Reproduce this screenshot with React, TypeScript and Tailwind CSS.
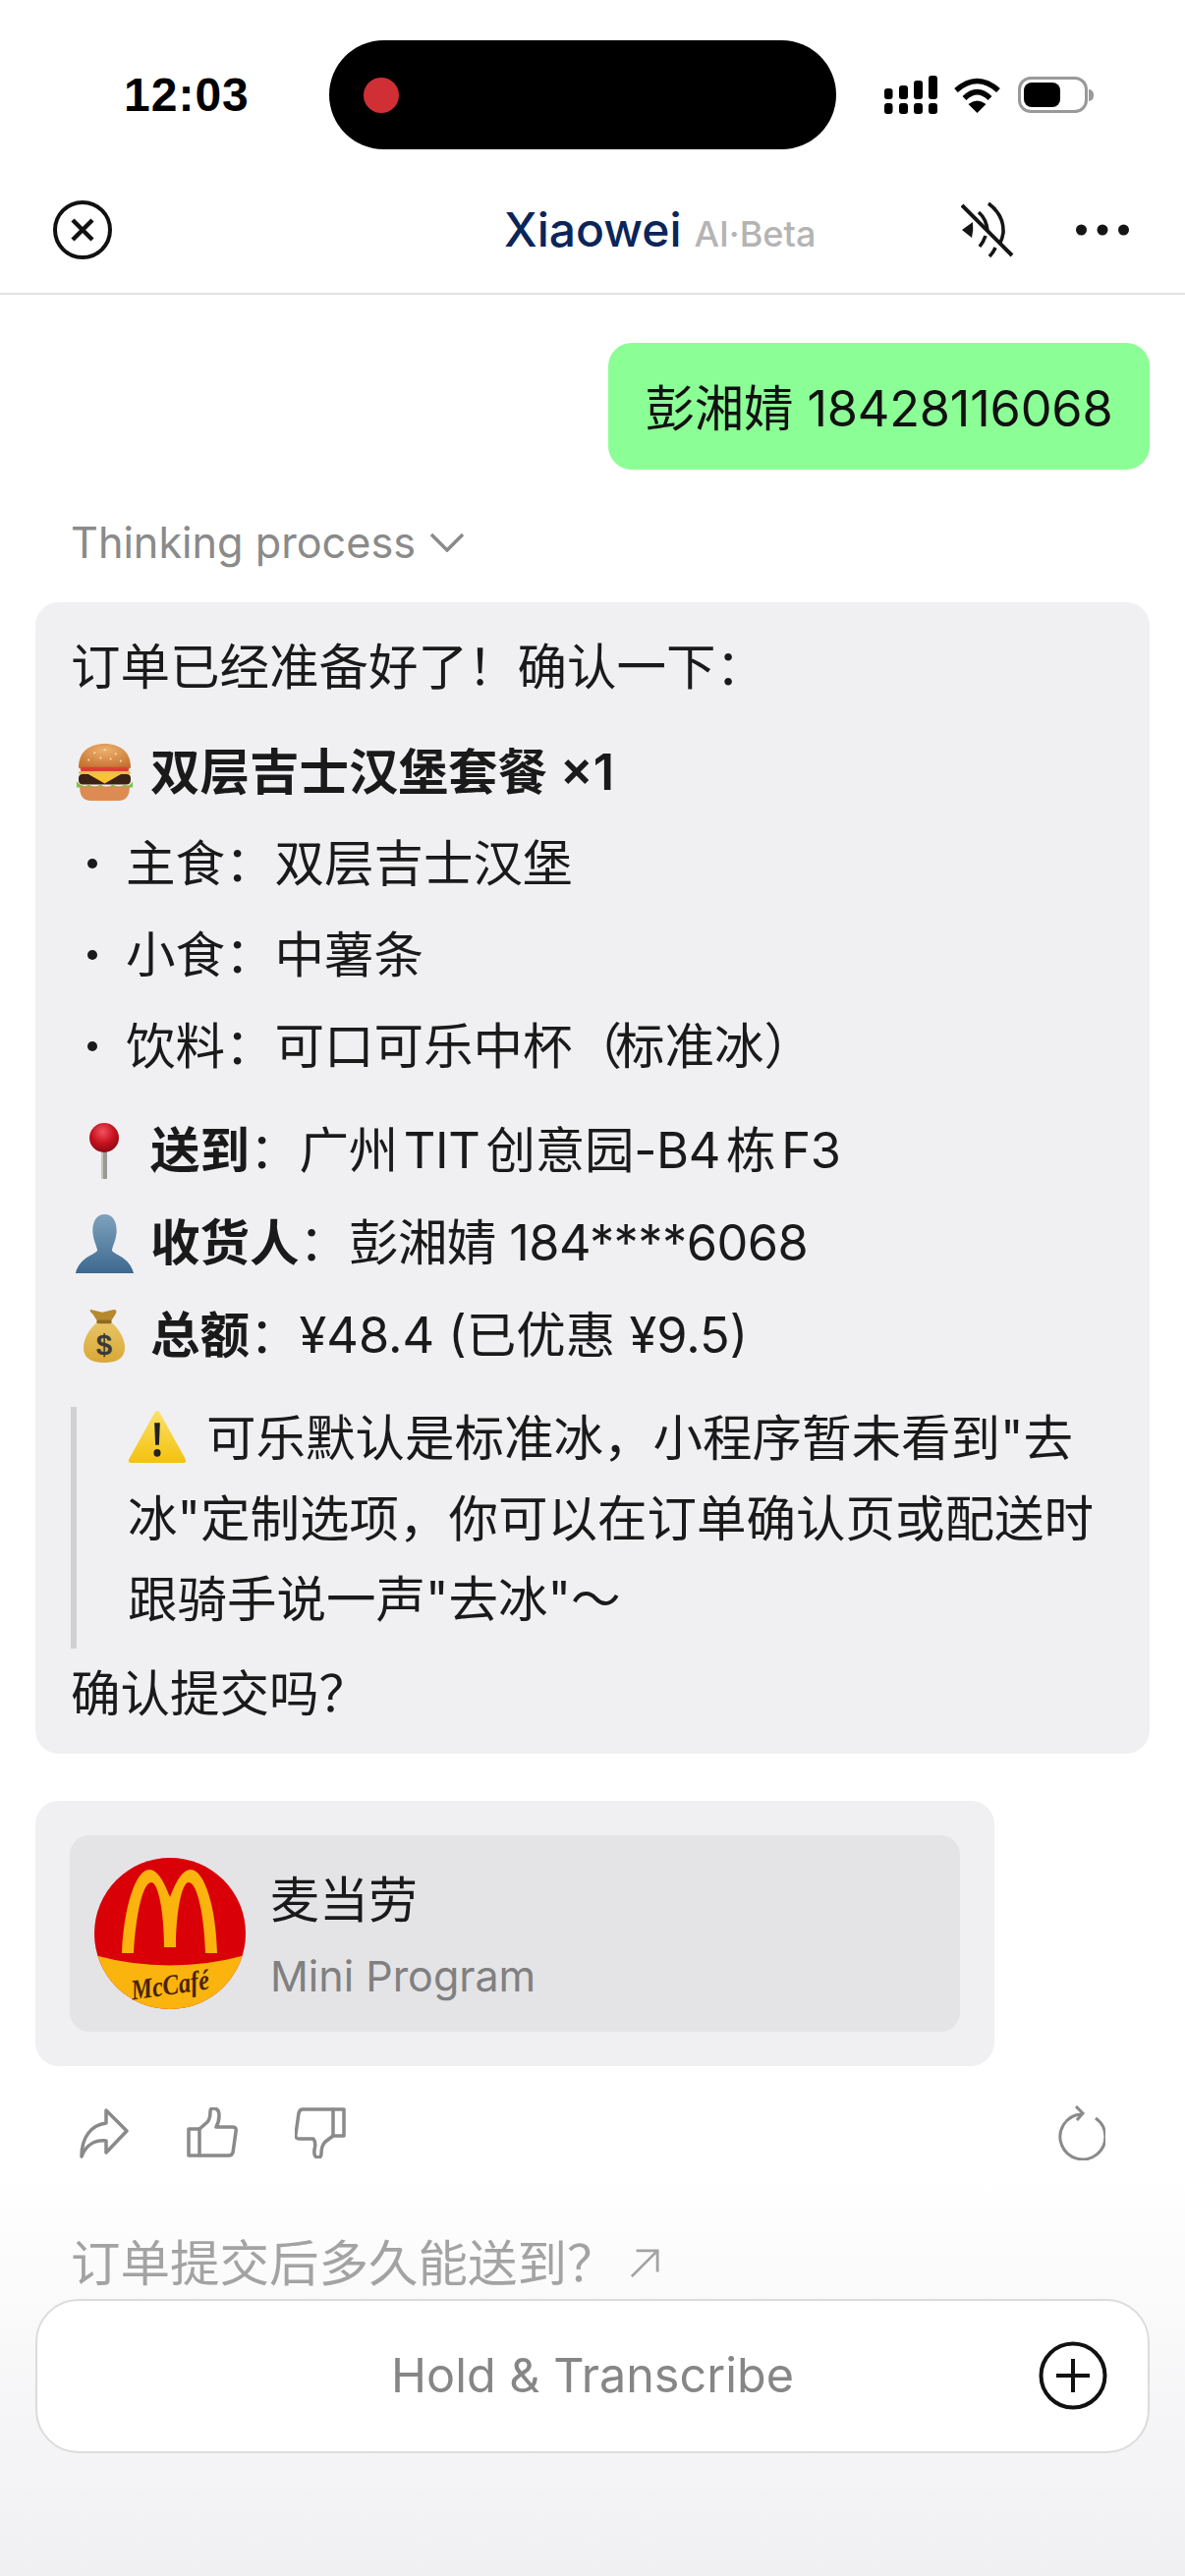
const font = "font-['Inter','Noto_Sans_CJK_SC',sans-serif]";

const CloseIcon = () => (
  <svg width="62" height="62" viewBox="0 0 62 62" fill="none" stroke="#111" strokeWidth="4">
    <circle cx="31" cy="31" r="28" />
    <path d="M21 21 L41 41 M41 21 L21 41" strokeWidth="4.5" />
  </svg>
);

const MuteIcon = () => (
  <svg width="54" height="58" viewBox="0 0 54 58" fill="none" stroke="#151515" strokeWidth="3.6">
    <path d="M12 21 L1 29 L11 37 Q13 29 12 21 Z" fill="#151515" stroke="none" />
    <path d="M18 11 Q26 18 27 30" />
    <path d="M25 35 Q23 41 19 46" />
    <path d="M28 2 Q44 14 43 32 Q42 38 40 42" />
    <path d="M35 47 Q33 52 29 56" />
    <path d="M1 4 L52 55" strokeWidth="4" />
  </svg>
);

const SignalIcon = () => (
  <svg width="54" height="39" viewBox="0 0 54 39" fill="#000">
    <rect x="0" y="13" width="8.5" height="11" rx="3" />
    <rect x="15" y="10" width="9" height="14" rx="3" />
    <rect x="30" y="5" width="9" height="19" rx="3" />
    <rect x="45" y="0" width="9" height="24" rx="3" />
    <rect x="0" y="28" width="8.5" height="11" rx="3" />
    <rect x="15" y="28" width="9" height="11" rx="3" />
    <rect x="30" y="28" width="9" height="11" rx="3" />
    <rect x="45" y="28" width="9" height="11" rx="3" />
  </svg>
);

const WifiIcon = () => (
  <svg width="47" height="36" viewBox="0 0 47 36" fill="none" stroke="#000" strokeWidth="5.5">
    <path d="M2 13 Q23.5 -6 45 13" />
    <path d="M10.5 21 Q23.5 8 36.5 21" />
    <path d="M23.5 36 L14.5 27 Q23.5 20 32.5 27 Z" fill="#000" stroke="none" />
  </svg>
);

const BatteryIcon = () => (
  <div className="flex items-center gap-[1px]">
    <div className="w-[71px] h-[37px] rounded-[13px] border-[3px] border-[#999] p-[3px] flex">
      <div className="w-[37px] h-full bg-black rounded-[8px]" />
    </div>
    <div className="w-[5px] h-[12px] bg-[#9a9a9a] rounded-r-full" />
  </div>
);

const DotsIcon = () => (
  <svg width="54" height="14" viewBox="0 0 54 14" fill="#151515">
    <circle cx="5.5" cy="7" r="5.5" />
    <circle cx="27" cy="7" r="5.5" />
    <circle cx="48.5" cy="7" r="5.5" />
  </svg>
);

const Burger = () => (
  <svg width="57" height="58" viewBox="2 2 56 56" preserveAspectRatio="none">
    <defs>
      <radialGradient id="bunTop" cx="0.5" cy="0.25" r="0.8">
        <stop offset="0" stopColor="#eeb06c" />
        <stop offset="1" stopColor="#c26d2c" />
      </radialGradient>
    </defs>
    <path d="M4 25 C4 9 16 2 30 2 C44 2 56 9 56 25 Q56 27 52 27 H8 Q4 27 4 25 Z" fill="url(#bunTop)" />
    <rect x="6" y="25" width="48" height="5" rx="2.5" fill="#d9402c" />
    <rect x="4" y="29" width="52" height="3" rx="1.5" fill="#f0b84a" />
    <rect x="4" y="32" width="52" height="10" rx="4" fill="#3a2015" />
    <path d="M12 31 H48 L30 41 Z" fill="#f8c434" />
    <path d="M2 39 Q8 46 14 42 Q20 46 26 42 Q32 47 38 42 Q44 46 50 42 Q55 45 58 39 V45 H2 Z" fill="#7cc242" />
    <path d="M5 44 H55 Q55 58 44 58 H16 Q5 58 5 44 Z" fill="#dc8c52" />
    <g fill="#f7dfb0">
      <circle cx="20" cy="11" r="1" /><circle cx="30" cy="8" r="1" /><circle cx="41" cy="12" r="1" /><circle cx="26" cy="16" r="1" /><circle cx="36" cy="17" r="1" /><circle cx="14" cy="18" r="1" /><circle cx="46" cy="19" r="1" />
    </g>
  </svg>
);

const Pin = () => (
  <svg width="30" height="57" viewBox="0 0 30 57">
    <defs>
      <radialGradient id="pinBall" cx="0.45" cy="0.3" r="0.75">
        <stop offset="0" stopColor="#f0525c" />
        <stop offset="0.55" stopColor="#c60f1e" />
        <stop offset="1" stopColor="#7f0a14" />
      </radialGradient>
    </defs>
    <rect x="12" y="24" width="6" height="33" rx="1" fill="#9a9a92" />
    <rect x="12" y="24" width="2" height="33" fill="#c4c4bc" />
    <ellipse cx="15" cy="15" rx="15" ry="15" fill="url(#pinBall)" />
  </svg>
);

const Person = () => (
  <svg width="61" height="61" viewBox="0 0 66 60" preserveAspectRatio="none">
    <defs>
      <linearGradient id="personFill" x1="0" y1="0" x2="0" y2="1">
        <stop offset="0" stopColor="#7fa2bd" />
        <stop offset="1" stopColor="#3d688f" />
      </linearGradient>
    </defs>
    <path d="M33 1 C43 1 47 10 46 20 C45 28 42 32 41 37 C43 42 60 43 65 60 H1 C6 43 23 42 25 37 C24 32 21 28 20 20 C19 10 23 1 33 1 Z" fill="url(#personFill)" />
  </svg>
);

const MoneyBag = () => (
  <svg width="42" height="55" viewBox="8 2 44 58" preserveAspectRatio="none">
    <defs>
      <linearGradient id="bagFill" x1="0" y1="0" x2="0" y2="1">
        <stop offset="0" stopColor="#e8c468" />
        <stop offset="1" stopColor="#d8a833" />
      </linearGradient>
    </defs>
    <path d="M16 3 L28 6 L40 3 Q45 3 42 8 L37 16 H23 L18 8 Q13 3 16 3 Z" fill="#b68a2c" />
    <path d="M23 16 H37 C46 24 52 34 52 44 C52 55 44 60 30 60 C16 60 8 55 8 44 C8 34 14 24 23 16 Z" fill="url(#bagFill)" />
    <rect x="22" y="14" width="16" height="4" rx="2" fill="#8f6a1e" />
    <text x="30" y="52" textAnchor="middle" fontSize="31" fontWeight="700" fill="#3a3a3a" fontFamily="Liberation Sans">$</text>
  </svg>
);

const Warning = () => (
  <svg width="60" height="55" viewBox="0 0 64 54" preserveAspectRatio="none">
    <defs>
      <linearGradient id="warnFill" x1="0" y1="0" x2="0" y2="1">
        <stop offset="0" stopColor="#fbe169" />
        <stop offset="1" stopColor="#f4c20d" />
      </linearGradient>
    </defs>
    <path d="M32 1 Q34 1 36 5 L62 48 Q65 53 60 53 H4 Q-1 53 2 48 L28 5 Q30 1 32 1 Z" fill="url(#warnFill)" />
    <path d="M29 13 H35 L34 35 H30 Z" fill="#222" />
    <circle cx="32" cy="43" r="3.8" fill="#222" />
  </svg>
);

const McLogo = () => (
  <svg width="154" height="154" viewBox="0 0 154 154">
    <defs>
      <clipPath id="logoClip"><circle cx="77" cy="77" r="77" /></clipPath>
    </defs>
    <g clipPath="url(#logoClip)">
      <rect width="154" height="154" fill="#d90007" />
      <path d="M0 99 Q77 120 154 99 V154 H0 Z" fill="#fbb40e" />
    </g>
    <path
      d="M28 97 C30 50 42 12 56 12 C66 12 73 30 77 40 C81 30 88 12 98 12 C112 12 124 50 125 97 H113 C112 60 105 25 96 25 C89 25 83 55 83 91 H71 C71 55 65 25 58 25 C49 25 42 60 40 97 Z"
      fill="#fbb40e"
    />
    <text x="77" y="139" textAnchor="middle" fontSize="29" fontStyle="italic" fontWeight="700" fill="#4a2308" fontFamily="Liberation Serif" textLength="80" lengthAdjust="spacingAndGlyphs" transform="rotate(-8 77 130)">McCafé</text>
  </svg>
);

const ShareIcon = () => (
  <svg width="52" height="52" viewBox="0 0 52 52" fill="none" stroke="#8a8a8a" strokeWidth="3.5" strokeLinejoin="round">
    <path d="M28 3 L49 24 L28 46 V34 C18 33 8 37 3 50 C3 30 13 18 28 16 Z" />
  </svg>
);

const ThumbUp = () => (
  <svg width="52" height="52" viewBox="0 0 52 52" fill="none" stroke="#8a8a8a" strokeWidth="3.5" strokeLinejoin="round">
    <path d="M2 22 H13 V49 H2 Z" />
    <path d="M13 22 L21 15 Q24 12 24 4 Q24 1 27 1 Q33 1 33 8 Q33 15 30 20 H47 Q51 20 50 25 L47 46 Q46 49 43 49 H13" />
  </svg>
);

const ThumbDown = () => (
  <svg width="52" height="52" viewBox="0 0 52 52" fill="none" stroke="#8a8a8a" strokeWidth="3.5" strokeLinejoin="round">
    <path d="M50 2 V29 H39 V2 Z" />
    <path d="M39 2 H8 Q5 2 4 6 L1 27 Q0 32 5 32 H19 Q22 36 20 43 Q19 51 24 51 Q27 51 27 47 Q27 39 31 35 L39 29" />
  </svg>
);

const RefreshIcon = () => (
  <svg width="52" height="56" viewBox="0 0 52 56" fill="none" stroke="#8a8a8a" strokeWidth="3">
    <path d="M27 9 A23 23 0 1 0 42 13" />
    <path d="M22 1 L29 8 L23 15" />
  </svg>
);

const PlusIcon = () => (
  <svg width="70" height="70" viewBox="0 0 70 70" fill="none" stroke="#111" strokeWidth="4">
    <circle cx="35" cy="35" r="32.5" />
    <path d="M18 35 H52 M35 18 V52" />
  </svg>
);

const Bullet = ({ children }: { children: React.ReactNode }) => (
  <div className="flex h-[82px] items-center">
    <span className="w-[10px] h-[10px] bg-[#1a1a1a] rounded-full ml-[17px] mr-[29px]" />
    <span>{children}</span>
  </div>
);

const EmojiRow = ({ icon, children }: { icon: React.ReactNode; children: React.ReactNode }) => (
  <div className="flex h-[82px] items-center">
    <span className="w-[68px] mr-[13px] flex justify-center shrink-0">{icon}</span>
    <span>{children}</span>
  </div>
);

export default function App() {
  return (
    <div className={`relative w-[1206px] h-[2622px] overflow-hidden bg-white text-[50.5px] text-[#1a1a1a] ${font}`}>
      {/* status bar */}
      <div className="flex items-center h-[111px] mt-[41px] pl-[126px]">
        <span className="w-[209px] text-[48px] font-semibold text-black font-['Liberation_Sans',sans-serif] tracking-[1px]">12:03</span>
        <div className="w-[516px] h-[111px] rounded-[56px] bg-black flex items-center pl-[35px]">
          <div className="w-[36px] h-[36px] rounded-full bg-[#d03035]" />
        </div>
        <div className="flex items-center ml-[49px]">
          <SignalIcon />
          <div className="ml-[17px]"><WifiIcon /></div>
          <div className="ml-[18px]"><BatteryIcon /></div>
        </div>
      </div>

      {/* header */}
      <div className="flex items-center h-[148px] border-b-2 border-[#e2e2e2] pt-[18px] pl-[53px] pr-[57px]">
        <CloseIcon />
        <div className="flex items-baseline gap-[13px] ml-[398px]">
          <span className="text-[48px] font-medium text-[#0b2559]">Xiaowei</span>
          <span className="text-[36px] font-medium text-[#b4b4b4]">AI·Beta</span>
        </div>
        <div className="flex items-center gap-[63px] ml-auto">
          <MuteIcon />
          <DotsIcon />
        </div>
      </div>

      {/* chat */}
      <div className="px-[36px] pt-[49px]">
        <div className="flex justify-end">
          <div className="w-[551px] h-[129px] rounded-[24px] bg-[#8cfe96] flex items-center justify-center pt-[4px]">
            <span className="text-[#111] tracking-[-0.2px]">彭湘婧 18428116068</span>
          </div>
        </div>

        <div className="flex items-center gap-[14px] h-[60px] mt-[44px] ml-[36px] text-[#8a8a8a] text-[43.2px]">
          Thinking process
          <svg width="36" height="20" viewBox="0 0 36 20" fill="none" stroke="#8a8a8a" strokeWidth="3.5">
            <path d="M2 2 L18 18 L34 2" />
          </svg>
        </div>

        <div className="mt-[31px] rounded-[24px] bg-[#f0f0f3] pt-[25px] pb-[20px] px-[36px]">
          <div className="h-[82px] flex items-center">订单已经准备好了！确认一下：</div>
          <div className="mt-[25px]">
            <EmojiRow icon={<Burger />}><b className="font-semibold">双层吉士汉堡套餐 ×1</b></EmojiRow>
          </div>
          <div className="mt-[11px] flex flex-col gap-[11px]">
            <Bullet>主食：双层吉士汉堡</Bullet>
            <Bullet>小食：中薯条</Bullet>
            <Bullet>饮料：可口可乐中杯<span className="tracking-[-7px]">（</span>标准冰）</Bullet>
          </div>
          <div className="mt-[24px] flex flex-col gap-[12px]">
            <EmojiRow icon={<Pin />}><b className="font-semibold">送到</b>：<span className="[word-spacing:-8px] tracking-[-0.3px]">广州 TIT 创意园-B4 栋 F3</span></EmojiRow>
            <EmojiRow icon={<Person />}><b className="font-semibold">收货人</b>：<span className="tracking-[-0.6px]">彭湘婧 184****6068</span></EmojiRow>
            <EmojiRow icon={<MoneyBag />}><b className="font-semibold">总额</b>：¥48.4 (已优惠 ¥9.5)</EmojiRow>
          </div>
          <div className="mt-[32px] flex border-l-[6px] border-[#d0d0d3] pl-[52px] leading-[82px]">
            <div className="-mt-[9px] pb-[9px]">
              <span className="inline-block align-[-8px] mr-[20px]"><Warning /></span>
              可乐默认是标准冰，小程序暂未看到"去冰"定制选项，你可以在订单确认页或配送时跟骑手说一声"去冰"～
            </div>
          </div>
          <div className="mt-[5px] h-[82px] flex items-center">确认提交吗？</div>
        </div>

        <div className="mt-[48px] w-[976px] rounded-[24px] bg-[#f0f0f3] p-[35px]">
          <div className="h-[200px] rounded-[20px] bg-[#e4e4e7] flex items-center pl-[25px]">
            <McLogo />
            <div className="ml-[25px] flex flex-col pt-[10px]">
              <span className="text-[50px] leading-[77px] text-[#1a1a1a]">麦当劳</span>
              <span className="text-[43px] leading-[77px] text-[#808080]">Mini Program</span>
            </div>
          </div>
        </div>

        <div className="flex items-center justify-between mt-[40px] pl-[44px] pr-[45px]">
          <div className="flex items-center gap-[58px]">
            <ShareIcon />
            <ThumbUp />
            <ThumbDown />
          </div>
          <RefreshIcon />
        </div>
      </div>

      {/* input overlay */}
      <div className="absolute left-0 right-0 bottom-0 h-[412px] bg-gradient-to-b from-white/0 via-[#f4f4f6]/70 to-[#f0f0f3] px-[36px] pt-[58px]">
        <div className="flex items-center gap-[13px] ml-[36px] h-[72px] text-[#a3a3a3] text-[50.5px]">
          订单提交后多久能送到？
          <svg width="30" height="30" viewBox="0 0 32 32" fill="none" stroke="#a3a3a3" strokeWidth="3">
            <path d="M2 30 L30 2 M7 2 H30 V25" />
          </svg>
        </div>
        <div className="h-[157px] rounded-[44px] bg-white border-2 border-[#dcdcdc] relative flex items-center justify-center">
          <span className="text-[48.5px] text-[#868686]">Hold &amp; Transcribe</span>
          <div className="absolute right-[41px] top-[41px]"><PlusIcon /></div>
        </div>
      </div>
    </div>
  );
}
